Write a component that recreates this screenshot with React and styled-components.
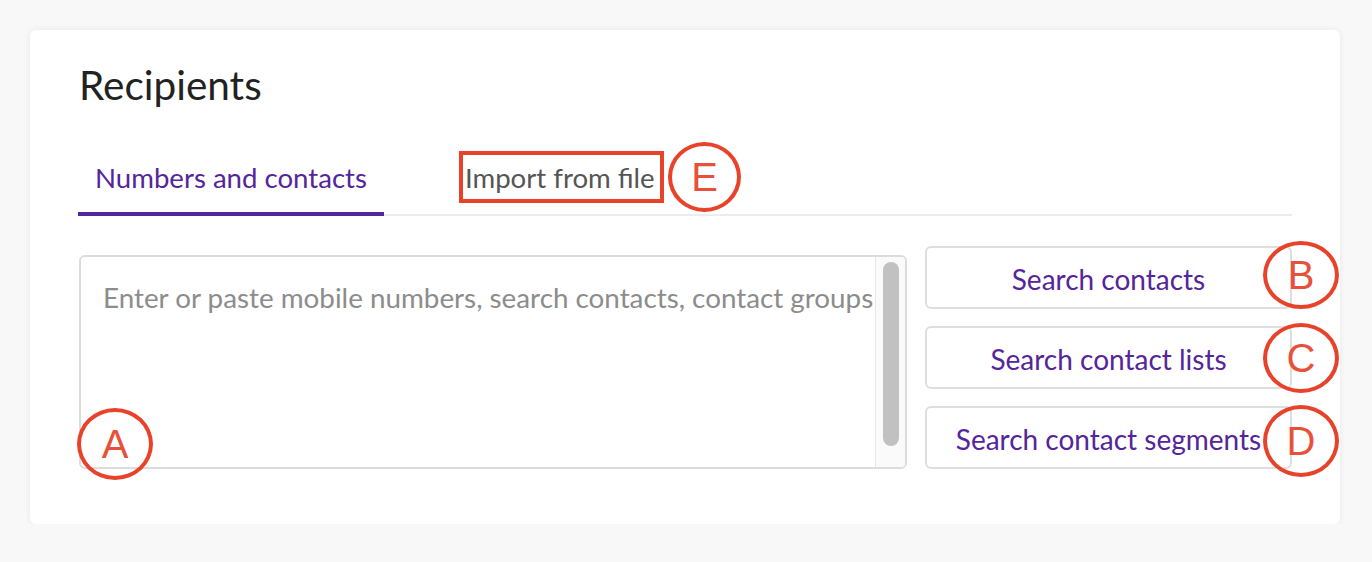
import React from "react";
import styled, { createGlobalStyle } from "styled-components";

const Global = createGlobalStyle`
  html, body { margin: 0; padding: 0; background: #f8f8f8; }
  body { font-family: Lato, "Open Sans", sans-serif; }
  * { box-sizing: border-box; }
`;

const Page = styled.div`
  padding: 30px 32px 0 30px;
`;

const Card = styled.section`
  position: relative;
  width: 1310px;
  height: 494px;
  background: #fff;
  border-radius: 6px;
  box-shadow: 0 0 6px rgba(0, 0, 0, 0.07);
  padding: 31px 48px 0 49px;
`;

const Title = styled.h2`
  margin: 0;
  font-size: 40.5px;
  line-height: 48px;
  font-weight: 400;
  color: #222;
`;

const TabBar = styled.div`
  display: flex;
  gap: 64px;
  margin: 52px 0 0 -1px;
  border-bottom: 2px solid #ececec;
`;

const Tab = styled.div`
  padding: 0 17px 18px;
  margin-bottom: -2px;
  font-size: 27.6px;
  line-height: 33px;
  color: ${(p) => (p.$active ? "#55259b" : "#555")};
  border-bottom: 4px solid ${(p) => (p.$active ? "#55259b" : "transparent")};
`;

const Row = styled.div`
  display: flex;
  align-items: flex-end;
  gap: 18px;
  margin-top: 30px;
`;

const InputBox = styled.div`
  display: flex;
  width: 828px;
  height: 214px;
  border: 2px solid #dcdcdc;
  border-radius: 6px;
  overflow: hidden;
`;

const Area = styled.textarea`
  flex: 1;
  border: none;
  outline: none;
  resize: none;
  padding: 25px 0 0 22px;
  font-family: Lato, sans-serif;
  font-size: 27.8px;
  line-height: 32px;
  color: #333;
  overflow: hidden;
  &::placeholder { color: #8c8c8c; }
`;

const Track = styled.div`
  width: 30px;
  border-left: 1px solid #e6e6e6;
  background: #fafafa;
  padding: 5px 0 0 7px;
`;

const Thumb = styled.div`
  width: 16px;
  height: 184px;
  border-radius: 8px;
  background: #c1c1c1;
`;

const Buttons = styled.div`
  flex: 1;
  display: flex;
  flex-direction: column;
  gap: 17px;
`;

const Button = styled.button`
  height: 63px;
  border: 2px solid #dedede;
  border-radius: 6px;
  background: #fff;
  font-family: Lato, sans-serif;
  font-size: 28px;
  color: #55259b;
  padding: 2px 0 0;
`;

const Mark = styled.div`
  position: absolute;
  left: ${(p) => p.$x}px;
  top: ${(p) => p.$y}px;
  width: ${(p) => p.$w || 74}px;
  height: ${(p) => p.$h || 70}px;
  border: 4px solid #e8432a;
  border-radius: 50%;
  display: flex;
  align-items: center;
  justify-content: center;
  font-family: "Liberation Sans", Arial, sans-serif;
  font-size: 40px;
  color: #e8503a;
  line-height: 1;
`;

const Box = styled.div`
  position: absolute;
  left: 429px;
  top: 121px;
  width: 205px;
  height: 52px;
  border: 4px solid #e8432a;
`;

export default function App() {
  return (
    <>
      <Global />
      <Page>
        <Card>
          <Title>Recipients</Title>
          <TabBar>
            <Tab $active>Numbers and contacts</Tab>
            <Tab>Import from file</Tab>
          </TabBar>
          <Row>
            <InputBox>
              <Area placeholder="Enter or paste mobile numbers, search contacts, contact groups" />
              <Track>
                <Thumb />
              </Track>
            </InputBox>
            <Buttons>
              <Button>Search contacts</Button>
              <Button>Search contact lists</Button>
              <Button>Search contact segments</Button>
            </Buttons>
          </Row>
          <Box />
          <Mark $x={638} $y={112} $w={73} $h={70}>E</Mark>
          <Mark $x={1233} $y={211} $w={76} $h={68}>B</Mark>
          <Mark $x={1233} $y={293} $w={76} $h={70}>C</Mark>
          <Mark $x={1233} $y={375} $w={76} $h={72}>D</Mark>
          <Mark $x={47} $y={378} $w={76} $h={72}>A</Mark>
        </Card>
      </Page>
    </>
  );
}
